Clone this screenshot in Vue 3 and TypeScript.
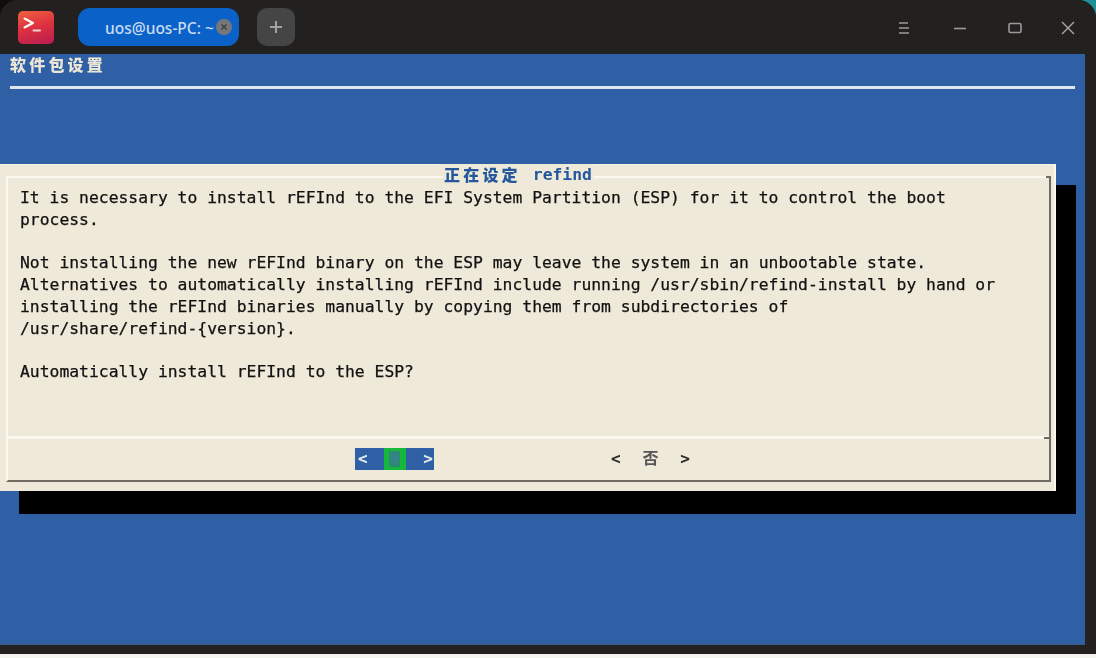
<script setup lang="ts">
const lines: string[] = [
  'It is necessary to install rEFInd to the EFI System Partition (ESP) for it to control the boot',
  'process.',
  '',
  'Not installing the new rEFInd binary on the ESP may leave the system in an unbootable state.',
  'Alternatives to automatically installing rEFInd include running /usr/sbin/refind-install by hand or',
  'installing the rEFInd binaries manually by copying them from subdirectories of',
  '/usr/share/refind-{version}.',
  '',
  'Automatically install rEFInd to the ESP?',
]
</script>

<template>
  <div class="screen">
    <div class="window">
      <header class="titlebar">
        <div class="logo">
          <svg width="36" height="33" viewBox="0 0 36 33" fill="none">
            <path d="M6.5 7.5 L15 12 L6.5 16.5" stroke="#fff" stroke-width="2" stroke-linecap="round" stroke-linejoin="round" />
            <path d="M15.5 19.5 H22" stroke="#f6d5d5" stroke-width="2" stroke-linecap="round" />
          </svg>
        </div>
        <div class="tab">
          <span class="tab-label">uos@uos-PC: ~</span>
          <span class="tab-close">
            <svg width="8" height="8" viewBox="0 0 8 8"><path d="M1.5 1.5 L6.5 6.5 M6.5 1.5 L1.5 6.5" stroke="#3a3a3a" stroke-width="1.3" /></svg>
          </span>
        </div>
        <div class="add">
          <svg width="14" height="14" viewBox="0 0 14 14"><path d="M7 1 V13 M1 7 H13" stroke="#a4a4a4" stroke-width="2" /></svg>
        </div>
        <div class="controls">
          <svg class="c-menu" width="12" height="14" viewBox="0 0 12 14" fill="none" stroke="#9a9a9a" stroke-width="1.5"><path d="M1 2 H10 M1 7 H11 M1 12 H11" /></svg>
          <svg class="c-min" width="12" height="14" viewBox="0 0 12 14" fill="none" stroke="#9a9a9a" stroke-width="1.6"><path d="M0 7.5 H12" /></svg>
          <svg class="c-max" width="14" height="12" viewBox="0 0 14 12" fill="none" stroke="#9a9a9a" stroke-width="1.6"><rect x="1" y="1.5" width="12" height="9" rx="1.5" /></svg>
          <svg class="c-close" width="14" height="14" viewBox="0 0 14 14" fill="none" stroke="#a8a8a8" stroke-width="1.4"><path d="M1 1 L13 13 M13 1 L1 13" /></svg>
        </div>
      </header>

      <main class="terminal">
        <div class="pkg-title">软件包设置</div>
        <div class="rule"></div>
        <div class="shadow"></div>
        <section class="dialog">
          <div class="frame">
            <div class="dialog-title"><span class="cjk">正在设定</span><span class="name">refind</span></div>
            <div class="message">
              <div v-for="(line, i) in lines" :key="i" class="line">{{ line }}</div>
            </div>
            <div class="actions">
              <div class="btn btn-active">
                <span>&lt;</span>
                <span class="focus"><span class="focus-inner">是</span></span>
                <span>&gt;</span>
              </div>
              <div class="btn btn-plain">
                <span>&lt;</span>
                <span class="no">否</span>
                <span>&gt;</span>
              </div>
            </div>
          </div>
        </section>
      </main>
    </div>
  </div>
</template>

<style>
html, body { margin: 0; background: #f4f4ee; overflow: hidden; }
</style>

<style scoped>
.screen {
  width: 1096px;
  height: 658px;
  background: linear-gradient(90deg, #120d08 50%, #1f8f98 50%) 0 0 / 100% 40px no-repeat, #f4f4ee;
  overflow: hidden;
}
.window {
  height: 654px;
  background: #232120;
  border-radius: 18px 18px 0 0;
  display: flex;
  flex-direction: column;
  filter: blur(0.4px);
}
.titlebar {
  height: 54px;
  flex: none;
  background: #232120;
  border-radius: 18px 18px 0 0;
  display: flex;
  align-items: flex-start;
  padding-left: 18px;
  box-sizing: border-box;
}
.logo {
  width: 36px;
  height: 33px;
  margin-top: 11px;
  border-radius: 5px;
  background: linear-gradient(165deg, #f0603f 0%, #dc3040 50%, #b81c50 100%);
}
.tab {
  width: 161px;
  height: 38px;
  margin: 8px 0 0 24px;
  border-radius: 12px;
  background: #0a62c9;
  display: flex;
  align-items: center;
  position: relative;
  color: #c9dcf2;
  font: 500 15.5px "Noto Sans", sans-serif;
}
.tab-label { margin: 2px 0 0 27px; white-space: nowrap; }
.tab-close {
  position: absolute;
  left: 138px;
  top: 11px;
  width: 16px;
  height: 16px;
  border-radius: 50%;
  background: #77777a;
  display: flex;
  align-items: center;
  justify-content: center;
}
.add {
  width: 38px;
  height: 38px;
  margin: 8px 0 0 18px;
  border-radius: 10px;
  background: #454545;
  display: flex;
  align-items: center;
  justify-content: center;
}
.controls {
  margin: 21px 21px 0 auto;
  display: flex;
  align-items: center;
  height: 14px;
}
.c-min { margin-left: 44px; }
.c-max { margin-left: 42px; }
.c-close { margin-left: 39px; }
.terminal {
  position: relative;
  width: 1085px;
  height: 588px;
  background: #2f60a5;
  border-bottom: 2px solid #3c5a92;
  box-sizing: content-box;
  padding-top: 1px;
}
.pkg-title {
  margin: -1px 0 0 10px;
  color: #ece6d6;
  font: 900 16px/20px "Noto Sans CJK SC", sans-serif;
  letter-spacing: 3.2px;
}
.rule {
  margin: 12px 10px 0;
  height: 3px;
  background: #dde5ee;
}
.shadow {
  position: absolute;
  left: 19px;
  top: 131px;
  width: 1057px;
  height: 329px;
  background: #000;
}
.dialog {
  position: absolute;
  left: 0;
  top: 110px;
  width: 1056px;
  height: 327px;
  background: #efe9d9;
  padding: 11px 3px 9px 6px;
  box-sizing: border-box;
  border-top: 1px solid #f6f0e2;
  border-right: 2px solid #faf7ee;
}
.frame {
  position: relative;
  height: 100%;
  box-sizing: border-box;
  border: 2px solid;
  border-color: #fbf8f0 #6f6a62 #6f6a62 #fbf8f0;
  display: flex;
  flex-direction: column;
}
.frame::after {
  content: "";
  position: absolute;
  right: -2px;
  top: -2px;
  width: 5px;
  height: 2px;
  background: #6f6a62;
}
.dialog-title {
  position: absolute;
  top: -14px;
  left: 435px;
  padding: 0 1px;
  display: flex;
  align-items: center;
  height: 22px;
  background: #efe9d9;
  color: #24579d;
  white-space: nowrap;
}
.cjk {
  margin-bottom: 3px;
  font: 900 16px/22px "Noto Sans CJK SC", sans-serif;
  letter-spacing: 3.2px;
}
.name {
  margin-left: 12px;
  font: 700 16.36px/22px "DejaVu Sans Mono", monospace;
}
.message {
  flex: 1;
  padding: 9px 0 0 12px;
  color: #111;
  font: 16.36px/21.75px "DejaVu Sans Mono", monospace;
  -webkit-text-stroke: 0.25px #111;
}
.line { height: 21.75px; white-space: pre; }
.actions {
  flex: none;
  height: 44px;
  border-top: 3px solid #fbf8f0;
  box-sizing: border-box;
  position: relative;
  display: flex;
  align-items: flex-start;
  font: bold 16px/22px "DejaVu Sans Mono", "Noto Sans CJK SC", monospace;
}
.actions::after {
  content: "";
  position: absolute;
  right: 0;
  top: -2px;
  width: 5px;
  height: 2px;
  background: #6f6a62;
}
.btn {
  height: 22px;
  margin-top: 9px;
  box-sizing: border-box;
  display: flex;
  justify-content: space-between;
  align-items: center;
}
.btn-active {
  width: 79px;
  margin-left: 347px;
  padding: 0 1px 0 3px;
  background: #2f60a5;
  color: #e6eaf0;
}
.focus {
  width: 22px;
  height: 22px;
  margin-right: 2px;
  display: flex;
  justify-content: center;
  background: #16b83c;
}
.focus-inner {
  width: 11px;
  margin-top: 3px;
  height: 16px;
  overflow: hidden;
  text-align: center;
  background: #2a8a72;
  color: #3f7fa2;
  font-size: 11px;
  font-weight: 400;
  line-height: 16px;
}
.btn-plain {
  width: 79px;
  margin-left: 177px;
  color: #2b2b2b;
}
.no { color: #555; }
</style>
